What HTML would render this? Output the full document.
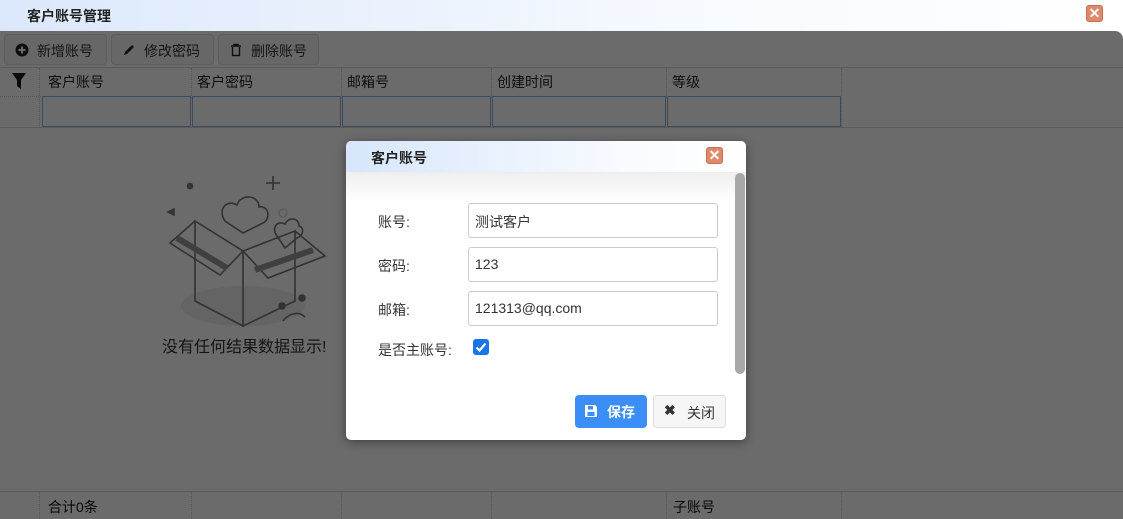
<!DOCTYPE html>
<html><head><meta charset="utf-8"><style>
*{box-sizing:border-box;margin:0;padding:0}
body{width:1123px;height:519px;overflow:hidden;background:#fff;font-family:"Liberation Sans","Noto Sans CJK SC",sans-serif;font-size:14px;position:relative;color:#1a1a1a}
.title{position:absolute;left:0;top:0;width:1123px;height:31px;background:linear-gradient(90deg,#dbe8fb,#f6f9fe 60%,#fff);}
.title span{position:absolute;left:27px;top:6px;font-size:14px;color:#222;font-weight:bold}
.xbtn{position:absolute;width:17px;height:17px;border-radius:3px;background:#e0896a;border:1px solid #c86e50;color:#fff;font-size:14px;font-weight:bold;line-height:15px;text-align:center}
.main{position:absolute;left:0;top:31px;width:1123px;height:488px;background:#fff}
.tb{position:absolute;height:31px;top:3px;border:1px solid #ddd;border-radius:4px;background:#f6f6f6;color:#333;padding:6px 0 0 32px}
.tb svg{position:absolute;left:10px;top:8px}
.hl{position:absolute;left:0;width:1123px;height:1px;background:#d8d8d8}
.vl{position:absolute;width:0;border-left:1px dotted #ccc}
.hd{position:absolute;top:41px;color:#222}
.fi{position:absolute;top:65px;height:31px;border:1px solid #8fb0e0;background:#fff}
.empty{position:absolute;left:162px;top:304px;font-size:16px;color:#333}
.mask{position:absolute;left:0;top:31px;width:1123px;height:488px}
.dlg{position:absolute;left:346px;top:141px;width:400px;height:299px;background:#fff;border-radius:5px;box-shadow:0 2px 10px rgba(0,0,0,.4);overflow:hidden}
.dh{height:31px;background:linear-gradient(90deg,#d7e6fb,#f8fbff 70%,#fff);position:relative}
.dh span{position:absolute;left:25px;top:7px;font-weight:bold;font-size:14px;color:#222}
.shade{position:absolute;left:0;top:31px;width:400px;height:30px;background:linear-gradient(#eee,#fff)}
.lbl{position:absolute;left:32px;color:#333}
.inp{position:absolute;left:122px;width:250px;height:35px;border:1px solid #ccc;border-radius:3px;padding:8px 0 0 6px;color:#333}
.sb{position:absolute;left:389px;top:32px;width:10px;height:201px;background:#a8a8a8;border-radius:5px}
.btn{position:absolute;top:254px;height:33px;border-radius:4px;padding:7px 0 0 0}
</style></head><body>
<div class="title"><span>客户账号管理</span><div class="xbtn" style="left:1086px;top:5px">✕</div></div>
<div class="main">
 <div class="tb" style="left:4px;width:103px"><svg width="14" height="14"><circle cx="7" cy="7" r="6.5" fill="#222"/><path d="M7 3.5v7M3.5 7h7" stroke="#fff" stroke-width="2"/></svg>新增账号</div>
 <div class="tb" style="left:111px;width:103px"><svg width="14" height="14"><path d="M2 12l1-3 7-7 2 2-7 7z" fill="#222"/></svg>修改密码</div>
 <div class="tb" style="left:218px;width:101px"><svg width="14" height="14"><path d="M2 3h10M5 3V1.5h4V3M3.5 4v8.5h7V4" stroke="#222" stroke-width="1.4" fill="none"/></svg>删除账号</div>
 <div class="hl" style="top:36px"></div>
 <div class="hl" style="top:96px"></div>
 <svg style="position:absolute;left:12px;top:42px" width="14" height="16"><path d="M0 0h14L9 7v9L5 13V7z" fill="#1a1a1a"/></svg>
 <div class="vl" style="left:39px;top:37px;height:60px"></div>
 <div class="vl" style="left:191px;top:37px;height:30px"></div>
 <div class="vl" style="left:341px;top:37px;height:30px"></div>
 <div class="vl" style="left:491px;top:37px;height:30px"></div>
 <div class="vl" style="left:666px;top:37px;height:30px"></div>
 <div class="vl" style="left:841px;top:37px;height:60px"></div>
 <div style="position:absolute;left:0;top:65px;width:841px;border-top:1px dotted #ccc"></div>
 <div class="hd" style="left:48px">客户账号</div><div class="hd" style="left:197px">客户密码</div><div class="hd" style="left:347px">邮箱号</div><div class="hd" style="left:497px">创建时间</div><div class="hd" style="left:672px">等级</div>
 <div class="fi" style="left:42px;width:149px"></div><div class="fi" style="left:192px;width:149px"></div><div class="fi" style="left:342px;width:149px"></div><div class="fi" style="left:492px;width:174px"></div><div class="fi" style="left:667px;width:174px"></div>
 <svg style="position:absolute;left:165px;top:135px" width="165" height="170" fill="none" stroke="#777" stroke-width="1.6">
  <ellipse cx="78" cy="140" rx="62" ry="20" fill="#eee" stroke="none"/>
  <path d="M108 10v14M101 17h14"/><circle cx="25" cy="20" r="2.5" fill="#888"/>
  <path d="M3 46l6-3v6z" fill="#888"/><circle cx="118" cy="47" r="4" stroke="#ddd"/>
  <path d="M30 55l48 30v75l-48-25zM78 85l52-20v70l-52 25z"/>
  <path d="M30 55l-25 22 50 32 23-24M130 65l30 25-57 22-25-27"/>
  <path d="M12 72l50 30" stroke="#999" stroke-width="6"/><path d="M90 104l58-20" stroke="#999" stroke-width="6"/>
  <path d="M60 55c-8-12 2-22 12-16 4-12 22-10 22 2 10-2 12 12 4 16l-20 10z"/>
  <path d="M112 70c-6-8 0-16 8-12 4-8 14-6 14 2 6 2 4 10-2 12l-12 10z"/>
  <circle cx="117" cy="140" r="3" fill="#777"/><circle cx="137" cy="132" r="3" fill="#777"/>
  <path d="M118 155c6-8 16-10 22-4"/>
 </svg>
 <div class="empty" style="top:302px">没有任何结果数据显示!</div>
 <div class="hl" style="top:460px"></div>
 <div class="vl" style="left:39px;top:461px;height:27px"></div><div class="vl" style="left:191px;top:461px;height:27px"></div><div class="vl" style="left:341px;top:461px;height:27px"></div><div class="vl" style="left:491px;top:461px;height:27px"></div><div class="vl" style="left:666px;top:461px;height:27px"></div><div class="vl" style="left:841px;top:461px;height:27px"></div>
 <div style="position:absolute;left:48px;top:466px;color:#111">合计0条</div>
 <div style="position:absolute;left:673px;top:466px;color:#111">子账号</div>
</div>
<div class="mask"><svg width="1123" height="488" style="display:block"><path d="M0 0H1115A8 8 0 0 1 1123 8V488H0Z" fill="#000" fill-opacity="0.58"/></svg></div>
<div class="dlg">
 <div class="dh"><span>客户账号</span><div class="xbtn" style="left:360px;top:6px">✕</div></div>
 <div class="shade"></div>
 <div class="sb"></div>
 <div class="lbl" style="top:71px">账号:</div><div class="inp" style="top:62px">测试客户</div>
 <div class="lbl" style="top:115px">密码:</div><div class="inp" style="top:106px">123</div>
 <div class="lbl" style="top:159px">邮箱:</div><div class="inp" style="top:150px">121313@qq.com</div>
 <div class="lbl" style="top:199px">是否主账号:</div>
 <div style="position:absolute;left:127px;top:198px;width:16px;height:16px;border-radius:3px;background:#1a73e8"><svg width="16" height="16"><path d="M3.5 8.5l3 3 6-7" stroke="#fff" stroke-width="2.2" fill="none"/></svg></div>
 <div class="btn" style="left:229px;width:72px;background:#3a8ef6;color:#fff;font-weight:bold;padding-left:32px"><svg style="position:absolute;left:9px;top:9px" width="14" height="14"><path d="M1 1h10l2 2v10H1z" fill="#fff"/><rect x="4" y="2" width="5" height="3.5" fill="#3a8ef6"/><rect x="3.5" y="8" width="7" height="4" fill="#3a8ef6"/></svg>保存</div>
 <div class="btn" style="left:307px;width:73px;background:#f6f6f6;border:1px solid #ddd;color:#333;padding-left:33px"><span style="position:absolute;left:10px;top:6px;font-weight:bold;color:#333">✖</span>关闭</div>
</div>
</body></html>
